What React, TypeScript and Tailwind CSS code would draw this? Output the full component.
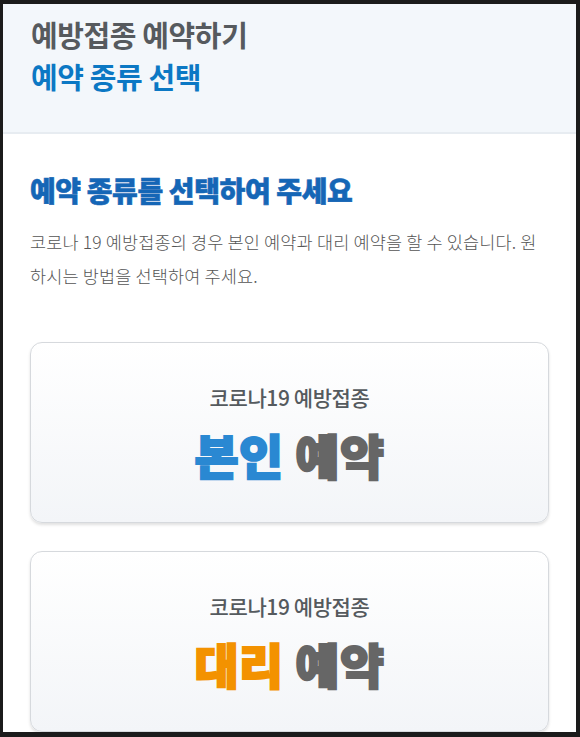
import React from "react";

const font = { fontFamily: '"Noto Sans CJK KR", "Noto Sans", sans-serif' };

function Card({ lead, leadClass }: { lead: string; leadClass: string }) {
  return (
    <button
      type="button"
      className="w-full rounded-[12px] border-[1.5px] border-[#d6d9dd] bg-gradient-to-b from-[#ffffff] to-[#f3f5f8] pt-[40px] pb-[40px] flex flex-col items-center gap-[15px] shadow-[0_2px_3px_rgba(0,0,0,0.12)]"
    >
      <span className="text-[21px] leading-[28px] font-medium tracking-[-0.4px] text-[#555a5e]">
        코로나19 예방접종
      </span>
      <span className="text-[48px] leading-[56px] font-black tracking-[0.5px] [-webkit-text-stroke:2px_currentColor]">
        <span className={leadClass}>{lead}</span>{" "}
        <span className="text-[#666666]">예약</span>
      </span>
    </button>
  );
}

export default function App() {
  return (
    <div
      className="h-[737px] w-[580px] bg-[#1b1b1b] pl-[3px] pt-[4px] pr-[4px] pb-[5px] overflow-hidden"
      style={font}
    >
      <div className="h-full w-full bg-white flex flex-col overflow-hidden">
        <header className="h-[130px] shrink-0 bg-[#f3f7fb] border-b-[2px] border-[#e7ecf1] px-[28px] pt-[9px]">
          <h1 className="text-[29px] leading-[42px] font-bold tracking-[-0.4px] text-[#565a5e]">
            예방접종 예약하기
          </h1>
          <h2 className="text-[29px] leading-[42px] font-bold tracking-[-0.4px] text-[#0b78c4]">
            예약 종류 선택
          </h2>
        </header>
        <main className="px-[27px] pt-[38px] flex flex-col">
          <h3 className="text-[28px] leading-[36px] font-black tracking-[-0.4px] text-[#1566b6] [-webkit-text-stroke:0.6px_currentColor]">
            예약 종류를 선택하여 주세요
          </h3>
          <p className="mt-[17px] text-[17.5px] leading-[34px] font-light tracking-[0.15px] text-[#555555]">
            코로나 19 예방접종의 경우 본인 예약과 대리 예약을 할 수 있습니다. 원
            <br />
            하시는 방법을 선택하여 주세요.
          </p>
          <div className="mt-[49px] flex flex-col gap-[28px]">
            <Card lead="본인" leadClass="text-[#2a88d2]" />
            <Card lead="대리" leadClass="text-[#f39200]" />
          </div>
        </main>
      </div>
    </div>
  );
}
